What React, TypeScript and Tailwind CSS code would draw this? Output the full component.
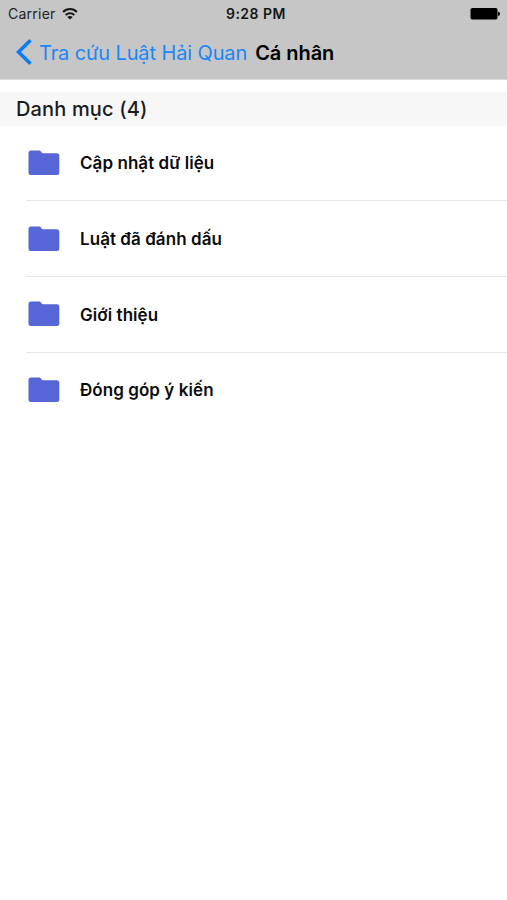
import { Fragment } from 'react';

const items = ['Cập nhật dữ liệu', 'Luật đã đánh dấu', 'Giới thiệu', 'Đóng góp ý kiến'];

function WifiIcon() {
  return (
    <svg width="16" height="12" viewBox="0 0 16 12" fill="none" stroke="#161616" strokeWidth="2">
      <path d="M1.100 4C5 .1 11 .1 14.900 4" />
      <path d="M3.700 7c2.400-2.300 6.200-2.300 8.600 0" />
      <path d="M8 11.500 5.300 8.900c1.400-1.300 4-1.300 5.400 0z" fill="#161616" stroke="none" />
    </svg>
  );
}

function BatteryIcon() {
  return (
    <svg width="31" height="12" viewBox="0 0 31 12">
      <rect x="0.5" y="0" width="27" height="11.5" rx="1.8" fill="#000" />
      <path d="M28 3.800c2.700.6 2.700 3.600 0 4.200z" fill="#000" />
    </svg>
  );
}

function FolderIcon() {
  return (
    <svg width="32" height="26" viewBox="0 0 32 26" fill="#5766d6">
      <path d="M3 .4h8.500c1.600 0 2 2.900 3.500 2.900H28.800a2.500 2.500 0 0 1 2.500 2.500v16.700a2.500 2.500 0 0 1-2.500 2.500H3A2.500 2.500 0 0 1 .5 22.500V2.900A2.500 2.500 0 0 1 3 .4z" />
    </svg>
  );
}

export default function App() {
  return (
    <div className="h-[900px] w-[507px] overflow-hidden bg-white font-['Inter',sans-serif] text-black">
      <header className="h-20 border-b border-[#dadada] bg-[#c6c6c6]">
        <div className="grid h-[27px] grid-cols-3 items-center pl-2 pr-1.5">
          <div className="flex items-center gap-1.5 text-[14px] tracking-[0.25px] whitespace-nowrap text-[#222]">
            <span>Carrier</span>
            <WifiIcon />
          </div>
          <span className="pl-[3px] text-center text-[14px] font-semibold tracking-[0.5px] whitespace-nowrap text-[#161616]">
            9:28 PM
          </span>
          <div className="flex justify-end">
            <BatteryIcon />
          </div>
        </div>
        <div className="flex h-[51px] items-center pl-4 text-[20px] whitespace-nowrap">
          <svg width="16" height="27" viewBox="0 0 16 27" fill="none" stroke="#087dfc" strokeWidth="3.5">
            <path d="M14.500 1.300 2.500 13l12 11.700" />
          </svg>
          <span className="ml-[7px] tracking-[-0.12px] text-[#1c86f8]">Tra cứu Luật Hải Quan</span>
          <h1 className="ml-2 font-semibold tracking-[-0.05px]">Cá nhân</h1>
        </div>
      </header>
      <h2 className="mt-3 flex h-[33.5px] items-center bg-[#f7f7f7] pl-4 text-[20px] font-medium tracking-[0.15px] text-[#1c1c1e]">
        Danh mục (4)
      </h2>
      <ul>
        {items.map((item, i) => (
          <Fragment key={item}>
            {i > 0 && <li className="ml-[26px] h-px bg-[#e6e6e8]" />}
            <li className="flex h-[74.75px] items-center pl-7">
              <FolderIcon />
              <span className="ml-5 pt-[2px] text-[17px] font-semibold tracking-[0.06px] text-[#0c0c0c]">{item}</span>
            </li>
          </Fragment>
        ))}
      </ul>
    </div>
  );
}
